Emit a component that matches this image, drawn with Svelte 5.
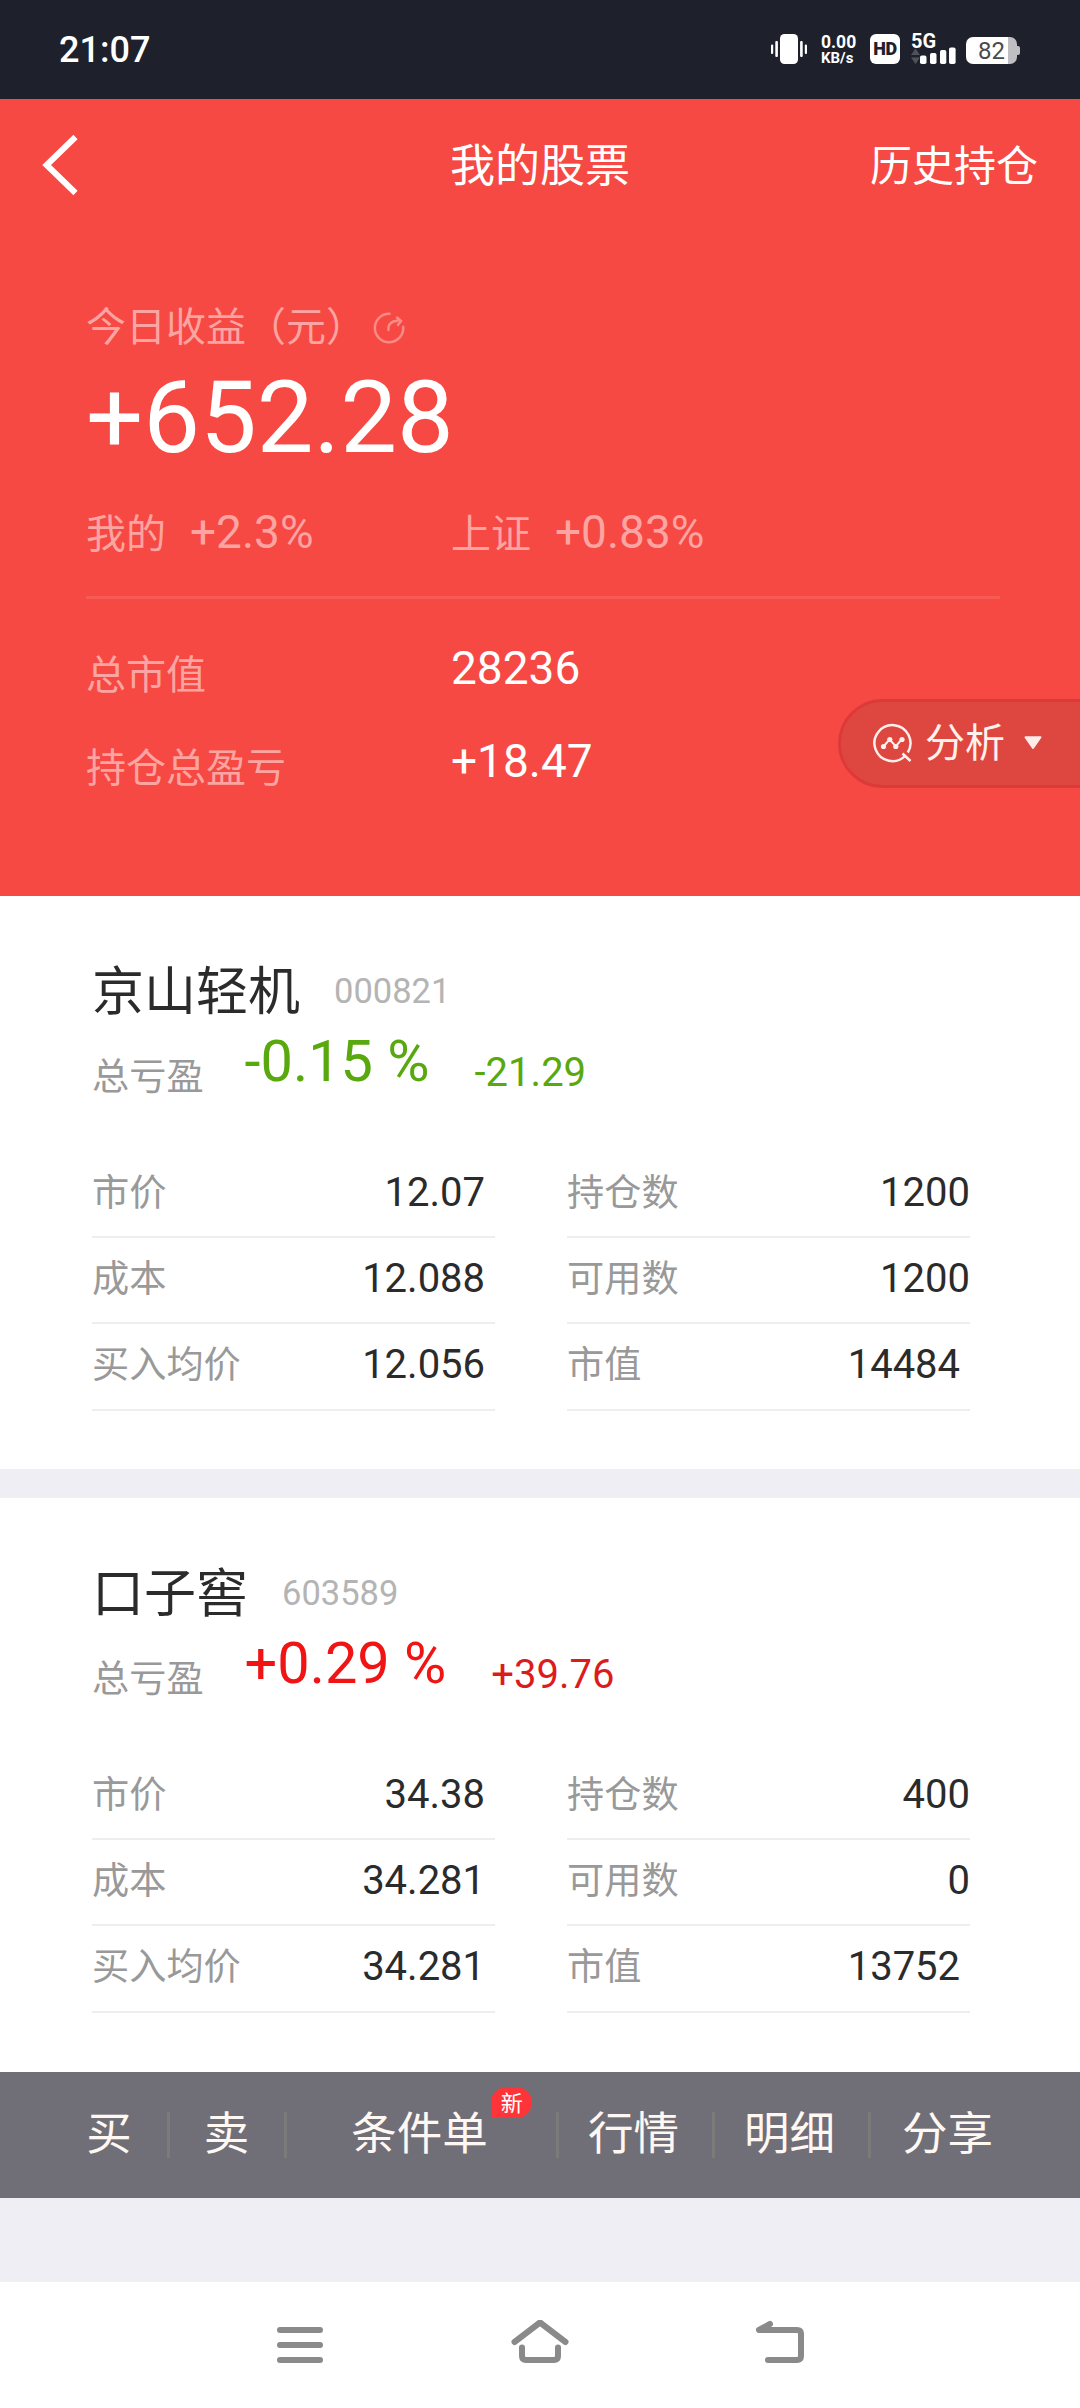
<script>
  const stocks = [
    {
      name: '京山轻机',
      code: '000821',
      percent: '-0.15 %',
      amount: '-21.29',
      trend: 'down',
      rows: [
        ['市价', '12.07 ', '持仓数', '1200'],
        ['成本', '12.088 ', '可用数', '1200'],
        ['买入均价', '12.056 ', '市值', '14484 '],
      ],
    },
    {
      name: '口子窖',
      code: '603589',
      percent: '+0.29 %',
      amount: '+39.76',
      trend: 'up',
      rows: [
        ['市价', '34.38 ', '持仓数', '400'],
        ['成本', '34.281 ', '可用数', '0'],
        ['买入均价', '34.281 ', '市值', '13752 '],
      ],
    },
  ];

  const actions = [
    { label: '买' },
    { label: '卖' },
    { label: '条件单', badge: '新' },
    { label: '行情' },
    { label: '明细' },
    { label: '分享' },
  ];
</script>

<div class="screen">
  <div class="status">
    <span class="clock">21:07</span>
    <div class="indicators">
      <svg class="vibrate" width="36" height="30" viewBox="0 0 36 30" fill="#fff">
        <rect x="0" y="10.5" width="2.2" height="9.5" rx="1" />
        <rect x="4.3" y="7" width="2.6" height="16" rx="1" />
        <rect x="9" y="0" width="18" height="30" rx="4.5" />
        <rect x="29.1" y="7" width="2.6" height="16" rx="1" />
        <rect x="33.8" y="10.5" width="2.2" height="9.5" rx="1" />
      </svg>
      <div class="speed">
        <span class="rate">0.00</span>
        <span class="unit">KB/s</span>
      </div>
      <div class="hd">HD</div>
      <div class="signal">
        <span class="net">5G</span>
        <svg width="45" height="17" viewBox="0 0 45 17">
          <path d="M4.5 1.5L9 8H0zM0 10.5h9L4.5 17z" fill="#50525a" />
          <g fill="#fff">
            <rect x="9" y="8.6" width="6.5" height="8.4" rx="1.8" />
            <rect x="19" y="6" width="6.5" height="11" rx="1.8" />
            <rect x="29" y="3" width="6.3" height="14" rx="1.8" />
            <rect x="38" y="0.5" width="6.6" height="16.5" rx="1.8" />
          </g>
        </svg>
      </div>
      <div class="battery"><span>82</span></div>
    </div>
  </div>

  <header class="header">
    <svg class="back" width="40" height="64" viewBox="0 0 40 64" fill="none" stroke="#fff" stroke-width="6">
      <path d="M37.5 4L8.6 32L37.5 60" />
    </svg>
    <h1>我的股票</h1>
    <span class="history">历史持仓</span>
  </header>

  <section class="summary">
    <div class="today">
      <span>今日收益（元）</span>
      <svg width="32" height="32" viewBox="0 0 32 32" fill="none" stroke="#fff" stroke-opacity=".36" stroke-width="2.5" stroke-linecap="round">
        <path d="M16.5 1.8A14.2 14.2 0 1 0 30.2 14.8" />
        <path d="M15.5 18c-.8-5.5 3-9 9-9.2" />
        <path d="M24 5.500l4 3.500-3 4" />
      </svg>
    </div>
    <div class="gain">+652.28</div>
    <div class="compare">
      <div><span class="tag">我的</span><span class="rate-value">+2.3%</span></div>
      <div><span class="tag">上证</span><span class="rate-value">+0.83%</span></div>
    </div>
    <hr />
    <dl class="totals">
      <dt>总市值</dt>
      <dd>28236</dd>
      <dt>持仓总盈亏</dt>
      <dd>+18.47</dd>
    </dl>
    <button class="analyze">
      <svg class="chart" width="40" height="40" viewBox="0 0 40 40" fill="none" stroke="#fff0ee" stroke-width="2.5">
        <path d="M32.5 32.500A18 18 0 1 1 34.800 29.500M29.500 30.500L37.500 38" />
        <path d="M10.500 23.500L16.500 16.500L22.800 23.300L28.500 16.500" stroke-width="2" />
        <g fill="#fff0ee" stroke="none">
          <circle cx="10.500" cy="23.500" r="2.600" />
          <circle cx="16.800" cy="16.500" r="2.600" />
          <circle cx="22.800" cy="23.500" r="2.600" />
          <circle cx="29" cy="16.500" r="2.600" />
        </g>
      </svg>
      <span>分析</span>
      <svg class="caret" width="18" height="14" viewBox="0 0 18 14">
        <path d="M1.500 1.200h15L9 12z" fill="#feeceb" stroke="#feeceb" stroke-width="2" stroke-linejoin="round" />
      </svg>
    </button>
  </section>

  <main>
    {#each stocks as stock}
      <article class="card {stock.trend}">
        <div class="title">
          <h2>{stock.name}</h2>
          <span class="code">{stock.code}</span>
        </div>
        <div class="profit">
          <span class="caption">总亏盈</span>
          <span class="percent">{stock.percent}</span>
          <span class="amount">{stock.amount}</span>
        </div>
        <div class="table">
          {#each stock.rows as [l1, v1, l2, v2]}
            <div class="cell"><span class="key">{l1}</span><span class="value">{v1}</span></div>
            <div class="cell"><span class="key">{l2}</span><span class="value">{v2}</span></div>
          {/each}
        </div>
      </article>
    {/each}
  </main>

  <nav class="actions">
    {#each actions as action}
      <div class="action">
        <span class="label">
          {action.label}
          {#if action.badge}<i class="badge">{action.badge}</i>{/if}
        </span>
      </div>
    {/each}
  </nav>

  <div class="system">
    <svg width="60" height="50" viewBox="0 0 60 50">
      <path d="M10 10h40M10 25h40M10 40h40" />
    </svg>
    <svg width="60" height="50" viewBox="0 0 60 50">
      <path d="M4.5 22L30 2.500L55.500 22M12 27.500V36q0 4 4 4h28q4 0 4-4V27.500" />
    </svg>
    <svg width="60" height="50" viewBox="0 0 60 50">
      <path d="M20 4L9 10H47q4 0 4 4V36q0 4-4 4H18" />
    </svg>
  </div>
</div>

<style>
  :global(body) {
    margin: 0;
  }
  .screen {
    width: 1080px;
    height: 2408px;
    display: flex;
    flex-direction: column;
    overflow: hidden;
    background: #efeef4;
    font-family: Roboto, 'Noto Sans CJK SC', sans-serif;
    font-weight: 400;
  }
  h1,
  h2,
  dl,
  dd {
    margin: 0;
    font-weight: 400;
  }

  .status {
    box-sizing: border-box;
    height: 99px;
    padding: 0 60px 0 59px;
    display: flex;
    justify-content: space-between;
    background: #1e212b;
    color: #fff;
  }
  .clock {
    font-size: 36px;
    font-weight: 500;
    line-height: 100px;
  }
  .indicators {
    display: flex;
    align-items: flex-start;
    padding-top: 34px;
  }
  .speed {
    width: 49px;
    margin-left: 14px;
    display: flex;
    flex-direction: column;
    font-weight: 700;
  }
  .rate {
    font-size: 17.5px;
    line-height: 16px;
  }
  .unit {
    font-size: 15px;
    line-height: 16px;
  }
  .hd {
    width: 30px;
    height: 30px;
    border-radius: 6px;
    background: #fff;
    color: #1e212b;
    font-size: 18px;
    font-weight: 900;
    line-height: 30px;
    text-align: center;
    letter-spacing: -0.5px;
  }
  .signal {
    width: 45px;
    margin-left: 11px;
    display: flex;
    flex-direction: column;
  }
  .signal svg {
    margin-top: -1px;
  }
  .net {
    font-size: 20px;
    font-weight: 700;
    line-height: 14px;
  }
  .battery {
    position: relative;
    width: 51px;
    height: 27px;
    margin: 3px 3px 0 10px;
    border-radius: 7px;
    background: linear-gradient(90deg, #fff 42px, #bfbfc3 42px);
    color: #4a4a4a;
    font-size: 24px;
    line-height: 28px;
    text-align: center;
  }
  .battery::after {
    content: '';
    position: absolute;
    left: 51px;
    top: 9px;
    width: 3px;
    height: 9px;
    border-radius: 0 2px 2px 0;
    background: #bfbfc3;
  }

  .header {
    box-sizing: border-box;
    height: 132px;
    padding: 3px 42px 0 38px;
    display: grid;
    grid-template-columns: 1fr auto 1fr;
    align-items: center;
    background: #f64943;
    color: #fff;
  }
  .back {
    margin-top: -4px;
  }
  h1 {
    padding-left: 4px;
    font-size: 45px;
    line-height: 60px;
  }
  .history {
    font-size: 42px;
    line-height: 60px;
    text-align: right;
  }

  .summary {
    position: relative;
    box-sizing: border-box;
    height: 665px;
    padding: 69px 80px 0 86px;
    background: #f64943;
    color: #fff;
  }
  .today {
    display: flex;
    align-items: center;
    gap: 7px;
    font-size: 40px;
    line-height: 56px;
  }
  .today span,
  .compare,
  dt {
    color: #fba4a1;
  }
  .gain {
    margin-top: 2px;
    font-size: 101px;
    line-height: 120px;
  }
  .compare {
    display: grid;
    grid-template-columns: 365px auto;
    height: 60px;
    margin-top: 24px;
  }
  .compare div {
    display: flex;
    align-items: baseline;
    gap: 24px;
    font-size: 46px;
    line-height: 60px;
  }
  .tag {
    font-size: 40px;
  }
  hr {
    height: 3px;
    margin: 34px 0 39px;
    border: 0;
    background: #f85b56;
  }
  .totals {
    display: grid;
    grid-template-columns: 365px auto;
    grid-auto-rows: 93px;
  }
  dt {
    padding-top: 8px;
    font-size: 40px;
    line-height: 60px;
  }
  dd {
    font-size: 46px;
    line-height: 60px;
  }
  .analyze {
    position: absolute;
    box-sizing: border-box;
    left: 838px;
    top: 468px;
    width: 260px;
    height: 89px;
    padding: 0 0 0 32px;
    display: flex;
    align-items: center;
    border: 3px solid #dc3a38;
    border-radius: 45px 0 0 45px;
    background: #de473f;
    color: #fff0ee;
    font: inherit;
    font-size: 40px;
    line-height: 60px;
  }
  .analyze span {
    margin: 1px 19px 0 12px;
  }
  .chart,
  .caret {
    margin-top: -2px;
  }

  .card {
    box-sizing: border-box;
    height: 573px;
    padding: 65px 110px 0 92px;
    background: #fff;
  }
  .card + .card {
    height: 574px;
    margin-top: 29px;
  }
  .title {
    display: flex;
    align-items: center;
    gap: 34px;
    line-height: 60px;
  }
  h2 {
    height: 60px;
    color: #2b2b2b;
    font-size: 52px;
    line-height: 63px;
  }
  .code {
    color: #b4b4b4;
    font-size: 34.5px;
  }
  .profit {
    display: flex;
    align-items: flex-start;
    height: 131px;
    line-height: 60px;
  }
  .caption {
    margin-top: 26px;
    color: #999;
    font-size: 37.2px;
  }
  .percent {
    margin: 10px 45px 0 41px;
    font-size: 57.7px;
  }
  .amount {
    margin-top: 22px;
    font-size: 40px;
  }
  .down .profit {
    color: #58a80e;
  }
  .up .percent {
    color: #f01414;
  }
  .up .amount {
    color: #dc1c1c;
  }
  .table {
    display: grid;
    grid-template-columns: 403px 403px;
    grid-auto-rows: 86.2px;
    column-gap: 72px;
  }
  .cell {
    box-sizing: border-box;
    display: flex;
    justify-content: space-between;
    border-bottom: 2px solid #eee;
    line-height: 82px;
  }
  .key {
    color: #999;
    font-size: 37.2px;
  }
  .value {
    color: #2b2b2b;
    font-size: 40px;
    white-space: pre;
  }

  .actions {
    box-sizing: border-box;
    height: 126px;
    padding-left: 52px;
    display: grid;
    grid-template-columns: 118px 117px 272px 156px 156px 153px;
    align-items: center;
    background: #706f78;
    color: #fff8f2;
    font-size: 45.5px;
    line-height: 46px;
  }
  .action {
    height: 46px;
    display: flex;
    justify-content: center;
    margin-top: -1px;
    border-right: 3px solid #7c7b7c;
  }
  .action:nth-child(-n + 2) {
    padding-right: 1px;
  }
  .action:nth-child(n + 3) {
    padding-right: 4px;
  }
  .action:last-child {
    padding-right: 0;
    border: 0;
  }
  .label {
    position: relative;
  }
  .badge {
    position: absolute;
    left: 140px;
    top: -25px;
    width: 41px;
    height: 31px;
    border-radius: 16px 16px 16px 2px;
    background: #ff3438;
    color: #fff;
    font-size: 22px;
    font-style: normal;
    line-height: 33px;
    text-align: center;
  }

  .system {
    flex: none;
    height: 126px;
    margin-top: 84px;
    padding-top: 38px;
    box-sizing: border-box;
    display: flex;
    justify-content: center;
    gap: 180px;
    background: #fff;
  }
  .system svg {
    fill: none;
    stroke: #8a8a8a;
    stroke-width: 6;
    stroke-linecap: round;
    stroke-linejoin: round;
  }
</style>
